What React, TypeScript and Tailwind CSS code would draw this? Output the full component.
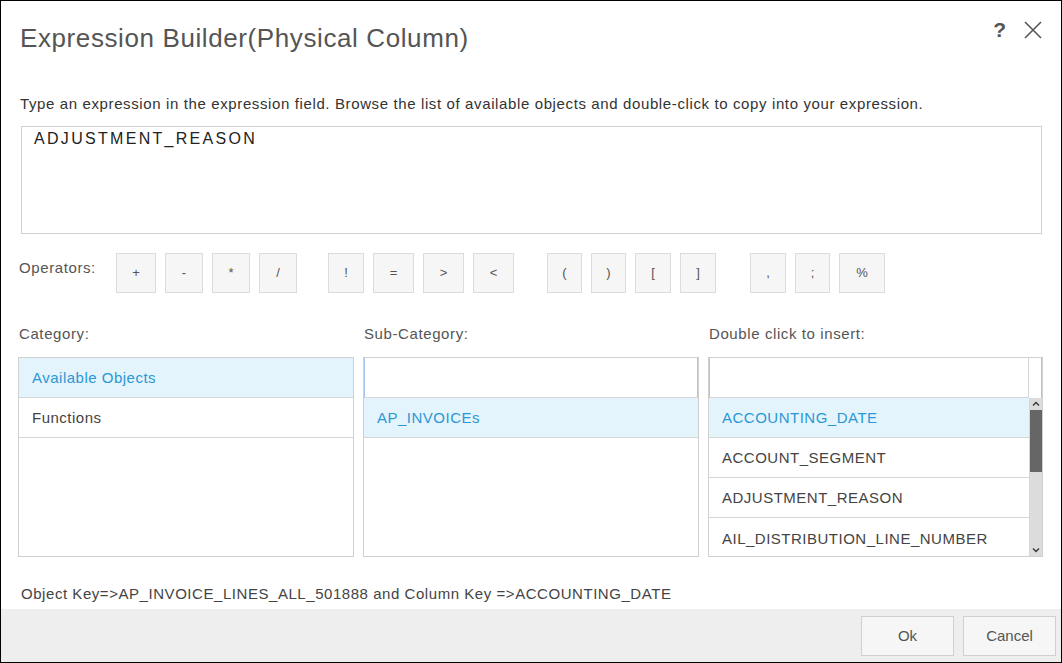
import React from 'react';

const ops: [string, number][][] = [
  [['+', 40], ['-', 38], ['*', 38], ['/', 38]],
  [['!', 36], ['=', 41], ['>', 41], ['<', 41]],
  [['(', 35], [')', 35], ['[', 36], [']', 36]],
  [[',', 36], [';', 35], ['%', 46]],
];

const groupGap = ['ml-[97px]', 'ml-[31px]', 'ml-[33px]', 'ml-[34px]'];

function Row({ label, selected, last }: { label: string; selected?: boolean; last?: boolean }) {
  return (
    <div
      className={
        'h-[40px] flex items-center pl-[13px] pt-[2px] text-[15px] tracking-[0.5px] ' +
        (last ? '' : 'border-b border-[#d6d6d6] ') +
        (selected ? 'bg-[#e4f4fd] text-[#2b97d4]' : 'text-[#444]')
      }
    >
      {label}
    </div>
  );
}

export default function App() {
  return (
    <div className="w-[1062px] h-[663px] border border-black bg-white flex flex-col font-['Liberation_Sans',Arial,sans-serif] text-[#555]">
      {/* header */}
      <div className="flex items-start pt-[22px] pl-[19px] pr-[18px] h-[80px]">
        <div className="text-[26px] leading-[31px] tracking-[0.6px] text-[#555] flex-1">Expression Builder(Physical Column)</div>
        <div className="flex items-center gap-[17px] mt-[-3px]">
          <span className="text-[21px] font-bold leading-[20px] text-[#555]">?</span>
          <svg width="20" height="20" viewBox="0 0 20 20">
            <path d="M2 2 L18 18 M18 2 L2 18" stroke="#555" strokeWidth="1.6" fill="none" />
          </svg>
        </div>
      </div>

      <div className="pl-[19px] text-[15px] leading-[20px] tracking-[0.62px] text-[#333] mt-[13px]">
        Type an expression in the expression field. Browse the list of available objects and double-click to copy into your expression.
      </div>

      {/* expression field */}
      <div className="ml-[20px] mt-[12px] w-[1021px] h-[108px] border border-[#d0d0d0] pl-[12px] pt-[2px] text-[16px] leading-[20px] tracking-[2.3px] text-[#222]">
        ADJUSTMENT_REASON
      </div>

      {/* operators */}
      <div className="flex items-start mt-[19px] pl-[18px]">
        <div className="text-[15px] leading-[20px] tracking-[0.6px] mt-[5px] w-0 whitespace-nowrap">Operators:</div>
        {ops.map((group, gi) => (
          <div key={gi} className={'flex gap-[9px] ' + groupGap[gi]}>
            {group.map(([sym, w]) => (
              <button
                key={sym}
                style={{ width: w }}
                className="h-[40px] bg-[#f6f6f6] border border-[#dcdcdc] text-[13px] text-[#555] flex items-center justify-center"
              >
                {sym}
              </button>
            ))}
          </div>
        ))}
      </div>

      {/* labels */}
      <div className="flex mt-[31px] text-[15px] leading-[20px] tracking-[0.6px] text-[#555]">
        <div className="ml-[18px] w-[345px]">Category:</div>
        <div className="w-[345px]">Sub-Category:</div>
        <div>Double click to insert:</div>
      </div>

      {/* lists */}
      <div className="flex gap-[9px] ml-[17px] mt-[13px]">
        <div className="w-[336px] h-[200px] border border-[#d0d0d0]">
          <Row label="Available Objects" selected />
          <Row label="Functions" />
        </div>

        <div className="w-[336px] h-[200px] border border-[#d0d0d0]">
          <div className="h-[40px] border-l border-r border-[#a9c6ef] border-b border-b-[#d6d6d6]" />
          <Row label="AP_INVOICEs" selected />
        </div>

        <div className="w-[335px] h-[200px] border border-[#d0d0d0] flex flex-col">
          <div className="h-[40px] flex border-l border-r border-[#a9c6ef]">
            <div className="flex-1 border-r border-[#d6d6d6] border-b border-b-[#d6d6d6]" />
            <div className="w-[12px]" />
          </div>
          <div className="flex flex-1 overflow-hidden">
            <div className="flex-1 border-r border-[#d6d6d6]">
              <Row label="ACCOUNTING_DATE" selected />
              <Row label="ACCOUNT_SEGMENT" />
              <Row label="ADJUSTMENT_REASON" />
              <Row label="AIL_DISTRIBUTION_LINE_NUMBER" last />
            </div>
            <div className="w-[12px] bg-[#dcdcdc] flex flex-col">
              <div className="h-[12px] flex items-center justify-center">
                <svg width="8" height="6" viewBox="0 0 8 6">
                  <path d="M1 4.5 L4 1.5 L7 4.5" stroke="#333" strokeWidth="1.3" fill="none" />
                </svg>
              </div>
              <div className="h-[62px] bg-[#666]" />
              <div className="flex-1" />
              <div className="h-[12px] flex items-center justify-center">
                <svg width="8" height="6" viewBox="0 0 8 6">
                  <path d="M1 1.5 L4 4.5 L7 1.5" stroke="#333" strokeWidth="1.3" fill="none" />
                </svg>
              </div>
            </div>
          </div>
        </div>
      </div>

      <div className="pl-[20px] mt-[27px] text-[15px] leading-[20px] tracking-[0.55px] text-[#444]">
        Object Key=&gt;AP_INVOICE_LINES_ALL_501888 and Column Key =&gt;ACCOUNTING_DATE
      </div>

      {/* footer */}
      <div className="mt-[5px] flex-1 bg-[#eeeeee] flex justify-end items-start pt-[7px] pr-[5px] gap-[9px]">
        <button className="w-[93px] h-[40px] bg-[#f6f6f6] border border-[#d0d0d0] text-[15px] text-[#555]">Ok</button>
        <button className="w-[93px] h-[40px] bg-[#f6f6f6] border border-[#d0d0d0] text-[15px] text-[#555]">Cancel</button>
      </div>
    </div>
  );
}
